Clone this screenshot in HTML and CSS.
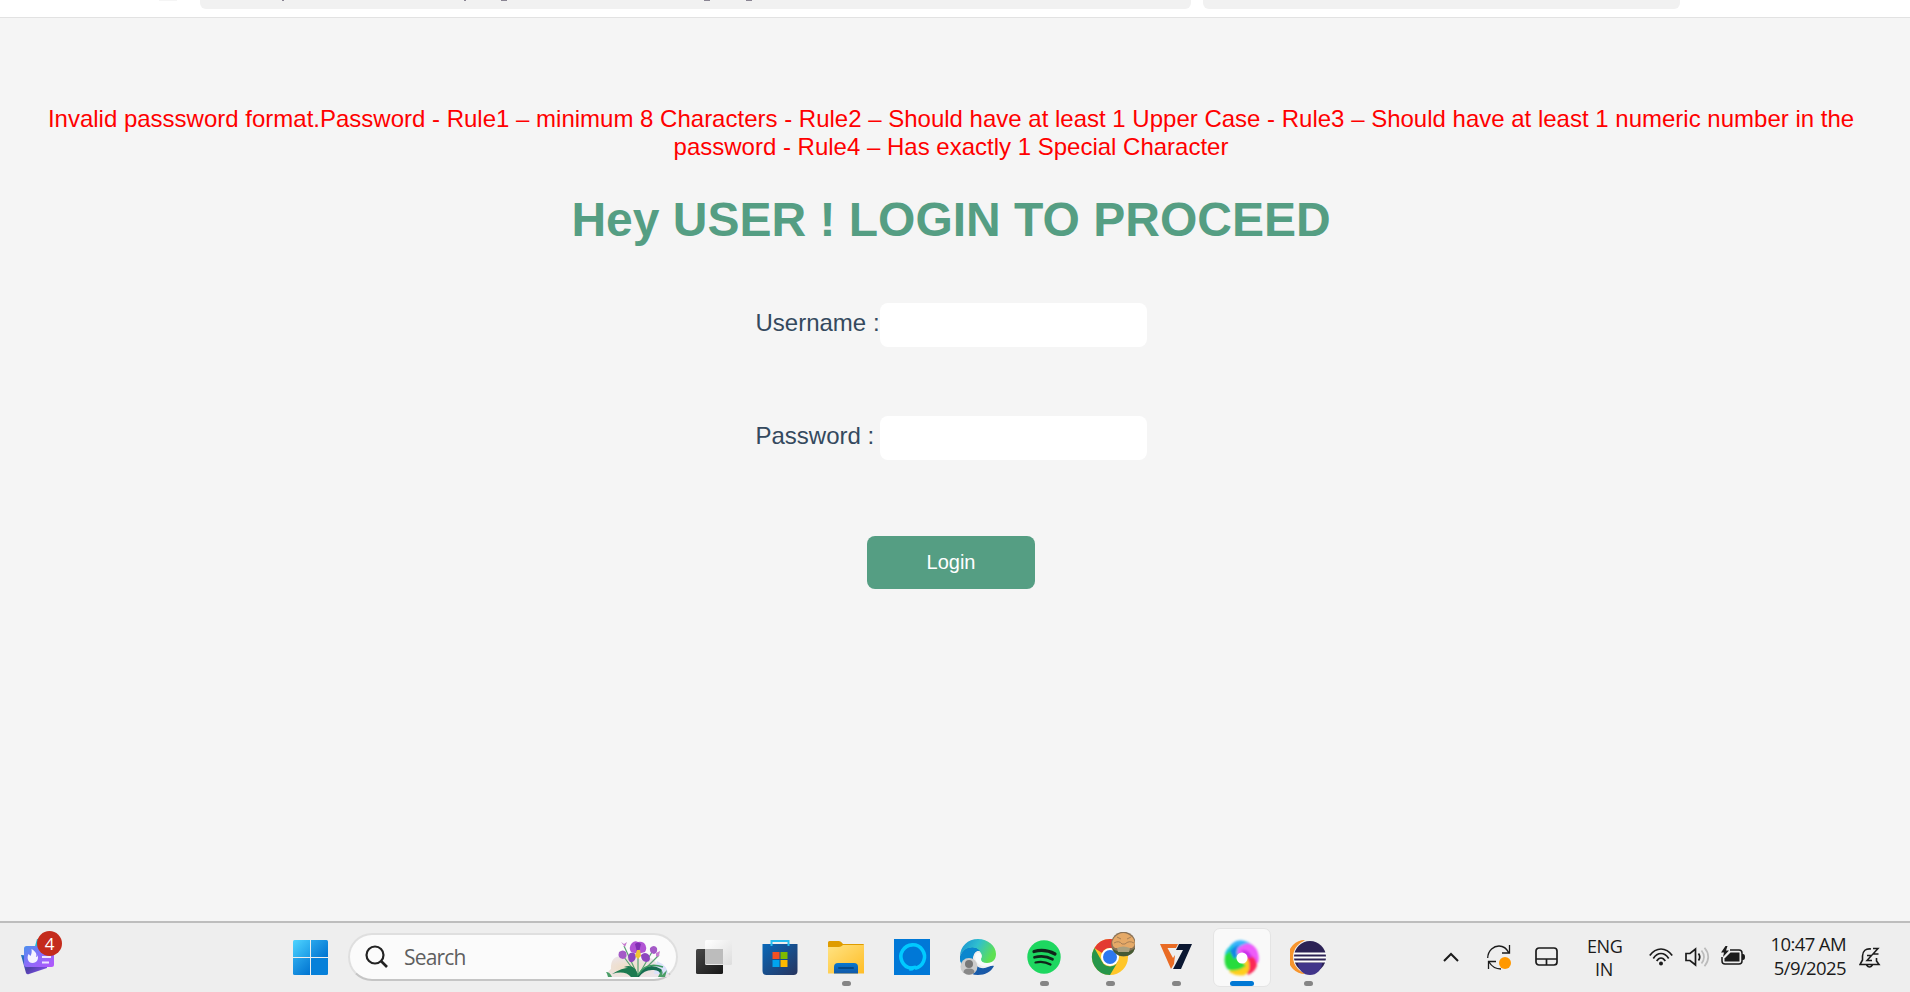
FILE: index.html
```html
<!DOCTYPE html>
<html lang="en">
<head>
<meta charset="utf-8">
<title>Login</title>
<link rel="stylesheet" href="styles.css">
</head>
<body>
<header class="toolbar">
  <div class="reload"></div>
  <div class="pill pill-url">
    <svg class="clipped-line" width="600" height="1" viewBox="0 0 600 1"><path d="M83 0h2v1h-2zM265 0h2v1h-2zM302 0h6v1h-6zM505 0h6v1h-6zM547 0h6v1h-6z" fill="#8a8593"/></svg>
  </div>
  <div class="pill pill-side"></div>
</header>
<main class="page">
  <p class="error">Invalid passsword format.Password - Rule1 – minimum 8 Characters - Rule2 – Should have at least 1 Upper Case - Rule3 – Should have at least 1 numeric number in the password - Rule4 – Has exactly 1 Special Character</p>
  <h1 class="title">Hey USER ! LOGIN TO PROCEED</h1>
  <form class="form">
    <div class="field"><label class="label" for="u">Username :</label><input class="input" id="u" type="text"></div>
    <div class="field"><label class="label" for="p">Password :</label><input class="input" id="p" type="password"></div>
    <button class="login" type="button">Login</button>
  </form>
</main>
<footer class="taskbar">
  <div class="widgets">
    <svg width="36" height="40" viewBox="0 0 36 40">
      <defs>
        <linearGradient id="wg" x1="0" y1="0" x2="1" y2="1"><stop offset="0" stop-color="#4b91ee"/><stop offset=".5" stop-color="#8b6cfa"/><stop offset="1" stop-color="#b455fb"/></linearGradient>
        <linearGradient id="wb" x1="0" y1="0" x2="1" y2="1"><stop offset="0" stop-color="#1e77c8"/><stop offset=".5" stop-color="#5041a8"/><stop offset="1" stop-color="#8d52fa"/></linearGradient>
      </defs>
      <path d="M14 9 16 2h12v10H14z" fill="#20bbd4"/>
      <path d="M0 18 5 36q1 2 3 1l18-6V20z" fill="url(#wb)"/>
      <rect x="3" y="9" width="30" height="21" rx="2.500" fill="url(#wg)"/>
      <path d="M10.500 12c5 3 5.500 5.500 4.500 8 1 0 1.500-1 1.500-2 1.500 4-.5 8-5 8s-6-5-4-9l2 2c1-2 1.500-4 1-7z" fill="#f5f3ff"/>
      <path d="M21 20h9M21 25.500h7" stroke="#eee5ff" stroke-width="2"/>
    </svg>
    <span class="badge">4</span>
  </div>
  <div class="apps">
    <svg class="start" width="35" height="35" viewBox="0 0 35 35">
      <defs><linearGradient id="win" x1="0" y1="0" x2="1" y2="1"><stop offset="0" stop-color="#4fd4ff"/><stop offset="1" stop-color="#1b9be6"/></linearGradient>
      <linearGradient id="win2" x1="0" y1="0" x2="1" y2="1"><stop offset="0" stop-color="#29a7ec"/><stop offset="1" stop-color="#0073d0"/></linearGradient></defs>
      <path d="M1.500 0H17v17H0V1.500Q0 0 1.500 0z" fill="url(#win)"/><path d="M18 0h15.500Q35 0 35 1.500V17H18z" fill="url(#win2)"/><path d="M0 18h17v17H1.500Q0 35 0 33.500z" fill="url(#win2)"/><path d="M18 18h17v15.500q0 1.500-1.500 1.500H18z" fill="#0680d9"/>
    </svg>
    <div class="search">
      <svg class="lens" width="24" height="24" viewBox="0 0 24 24" fill="none" stroke="#222" stroke-width="2.200"><circle cx="10" cy="10" r="8.500"/><path d="m16 16 6 6" stroke-width="2.600"/></svg>
      <span class="search-text">Search</span>
      <svg class="flower" width="64" height="37" viewBox="0 0 64 37">
        <defs><radialGradient id="fb" cx=".3" cy=".6"><stop offset="0" stop-color="#f0ddc4"/><stop offset="1" stop-color="#ebe4e8"/></radialGradient></defs>
        <path d="M3 36Q0 31 5 28 4 14 18 15q9-5 17 4 9-7 16 4 9 1 10 7l3 6z" fill="url(#fb)"/>
        <path d="M51 20q11 5 11 13H48z" fill="#dbe1fa"/>
        <g fill="none" stroke="#5aa274" stroke-width="1.200"><path d="M32 35 18 5M32 35V14M32 35 46 11M32 35 18 16M32 35 53 14"/></g>
        <path d="M32 36Q29 19 6 33q13-4 19 3zM32 36Q30 22 18 26q9 1 11 10z" fill="#1c7a50"/>
        <path d="M31 36Q40 19 55 28q3 4 0 7-1-7-9-6-8 0-13 7z" fill="#176d52"/>
        <path d="M32 34Q40 20 57 26" fill="none" stroke="#3b9b62" stroke-width="1.500"/>
        <path d="M2 36q-1-4-2-5 4 0 6 5M52 36l4-8v6l5-5-2 7z" fill="#4a9e68"/>
        <path d="M26 2q3-3 6-1 3-1 6 1 4 4 1 9l-7 2-7-2q-3-5 1-9z" fill="#b154d4"/>
        <path d="M29 3q3-3 6 0l-2 8h-2z" fill="#812fb3"/>
        <path d="M24 12q5-2 6 3-1 7-6 6-4-5 0-9zM35 14q4-4 8 0 3 7-3 7-5-1-5-7z" fill="#8d46be"/>
        <path d="M31 9h3l1 6-3 3-3-3z" fill="#efc635"/>
        <g fill="#a45ac7"><path d="M13 11q4-3 7 0 2 6-3 7-6-1-4-7zM44 7q4-4 7 0 1 5-3 6-5-1-4-6z"/></g>
        <g fill="#c77bd1"><path d="m15 1 3 2 3-2-2 5zM50 12l4-2-1 5-3 1z"/></g>
      </svg>
    </div>
    <div class="cell"><svg width="36" height="36" viewBox="0 0 36 36"><defs><linearGradient id="tv" x2="1" y2="1"><stop stop-color="#474747"/><stop offset="1" stop-color="#171717"/></linearGradient><linearGradient id="tg" x2="1" y2="1"><stop stop-color="#fff"/><stop offset="1" stop-color="#ddd"/></linearGradient></defs><rect x="0" y="10" width="27" height="25" rx="1.500" fill="url(#tv)"/><rect x="9" y="1" width="27" height="25" rx="1.500" fill="url(#tg)"/><path d="M9 10h18v15H10q-1 0-1-1z" fill="#bcbcbc"/></svg></div>
    <div class="cell store"><svg width="36" height="36" viewBox="0 0 36 36"><defs><linearGradient id="st" x2="1" y2="1"><stop stop-color="#0968b9"/><stop offset="1" stop-color="#27345e"/></linearGradient></defs><path d="M.5 5h35v27q0 4-4 4h-27q-4 0-4-4z" fill="url(#st)"/><path d="M9.500 7V2h17v5" fill="none" stroke="#27bdf0" stroke-width="2"/><path d="M10.500 13h7v7h-7z" fill="#f25022"/><path d="M18.500 13h7v7h-7z" fill="#7fba00"/><path d="M10.500 21h7v7h-7z" fill="#00a4ef"/><path d="M18.500 21h7v7h-7z" fill="#ffb900"/></svg></div>
    <div class="cell"><svg width="36" height="36" viewBox="0 0 36 36"><defs><linearGradient id="fo" x2="1" y2="1"><stop stop-color="#ffe383"/><stop offset="1" stop-color="#ffbd26"/></linearGradient><linearGradient id="fp" x2="0" y2="1"><stop stop-color="#0878d0"/><stop offset="1" stop-color="#1258a7"/></linearGradient></defs><path d="M0 3.500Q0 2 1.500 2H11q2 0 4 3h20q1 0 1 1v10H0z" fill="#df9c00"/><path d="M0 8h11q2 0 4-2h21v28.500H0z" fill="url(#fo)"/><path d="M6 34.500V28q0-4 4-4h16q4 0 4 4v6.500z" fill="url(#fp)"/><path d="M11 29h14" stroke="#064a88" stroke-width="2" stroke-linecap="round"/></svg><i class="dot"></i></div>
    <div class="cell"><svg width="36" height="36" viewBox="0 0 36 36"><path fill="#0078d7" d="M0 0h36v36H0z"/><path d="M17 31.500v-2.200A11.800 11.800 0 1 1 21 29.200" fill="none" stroke="#00caff" stroke-width="3.600"/><path d="M15.500 31.500q5-.5 8-3l-2-2-6 1z" fill="#00caff"/></svg></div>
    <div class="cell"><svg width="36" height="36" viewBox="0 0 36 36"><defs><linearGradient id="eg" x2="1" y2=".4"><stop stop-color="#168cd2"/><stop offset=".5" stop-color="#30bfcf"/><stop offset="1" stop-color="#5ee052"/></linearGradient><linearGradient id="eb" x2="1" y2="1"><stop stop-color="#0a69b7"/><stop offset="1" stop-color="#1d55a4"/></linearGradient></defs><path d="M0 18C0 7 8 0 18 0s18 7 18 15c0 6-4 9-9 9-6 0-8-2-6-5 2-4-1-8-6-9C8 8 1 13 0 18z" fill="url(#eg)"/><path d="M0 18C3 8 15 6 20 12c-4-1-7 3-7 7 0 7 6 11 12 10 4-1 6-3 9-2-3 6-9 9-16 9C8 36 0 28 0 18z" fill="url(#eb)"/><path d="M0 18C3 8 15 6 20 12c-4-1-7 3-7 7l-8 8q-5-1-5-9z" fill="#0b87ce"/><path d="M15 17q1-4 5-3 3 2 1 6 0 4 6 4 5 0 7-2l-1 4q-8 3-13 0-5-3-5-9z" fill="#f7fafb"/><circle cx="9" cy="27.500" r="8.500" fill="#ccc"/><circle cx="9" cy="25" r="4" fill="#777"/><path d="M3.500 33.500q0-4 5.500-4t5.500 4Q9 38 3.500 33.500z" fill="#888"/></svg></div>
    <div class="cell"><svg width="36" height="36" viewBox="0 0 36 36"><circle cx="18" cy="18" r="16.700" fill="#1ed760"/><g fill="none" stroke="#10251a" stroke-linecap="round"><path d="M8 12.500q11-3 21 2.500" stroke-width="3.200"/><path d="M8.500 18.300q10-2.500 18 2" stroke-width="2.700"/><path d="M9.500 23.500q8-2 15 2" stroke-width="2.200"/></g></svg><i class="dot"></i></div>
    <div class="cell"><svg width="50" height="50" viewBox="-7 -7 50 50"><circle cx="18" cy="18" r="18" fill="#ffc629"/><path d="M2.400 9A18 18 0 0 1 33.600 9H18a9 9 0 0 0-8 5z" fill="#e33b32"/><path d="M2.400 9A18 18 0 0 0 18 36l8-13.500a9 9 0 0 1-16 0z" fill="#26964a"/><circle cx="18" cy="18" r="9" fill="#fff"/><circle cx="18" cy="18" r="7" fill="#2e78ef"/><circle cx="31.500" cy="5" r="12.300" fill="#8a7358"/><path d="M22-1q9-10 19 0 4 7-1 10H23q-5-4-1-10z" fill="#e5a967"/><path d="M20 9q4 4 11 3 7 1 12-3-2 8-11.500 8.300Q23 17 20 9z" fill="#465a34"/><path d="M25 9q6-3 13 0l-1 4H26z" fill="#aaa07e"/><path d="M22 4q5-3 8 1h3q4-4 9-1M25-2l4 2M35 0l4-2" fill="none" stroke="#a87f54" stroke-width="1"/></svg><i class="dot"></i></div>
    <div class="cell"><svg width="36" height="36" viewBox="0 0 36 36"><path d="M2 5h18l-2 4H9.500l5.500 10 2-3-1 9-3 5z" fill="#e96b24"/><path d="M21 5h13L23 30h-8l10-19h-7z" fill="#0b1731"/></svg><i class="dot"></i></div>
    <div class="cell active"><svg width="40" height="40" viewBox="-20 -20 40 40"><defs><filter id="soft" x="-20%" y="-20%" width="140%" height="140%"><feGaussianBlur stdDeviation=".8"/></filter></defs><g filter="url(#soft)"><path d="M-14-9Q-8-20 3-17 11-14 12-10L2-5-9 1z" fill="#38b4fa"/><path d="M-8 0Q-18 0-17-4-16-10-9-13L-3-4z" fill="#1cc5dc"/><path d="M-4-10Q8-20 15-8 18 0 16 5L8 4 4-3-5-4z" fill="#ed5cfa"/><path d="M4-5Q15-1 15 7 14 13 6 17L1 9 5 2z" fill="#fb2755"/><path d="M6 1Q10 12 3 17-5 19-13 14L-6 5 2 5z" fill="#ffce1f"/><path d="M-17-3Q-19 8-13 12-5 14 4 8L0 4-5 0-7-6-11-8z" fill="#26dc3c"/><path d="M-12-7Q-7-13-2-13-8-8-5-2L-8 1z" fill="#1583e8"/><path d="M-1-8Q8-9 10 0L4-1z" fill="#c92ee9"/></g><circle r="5.500" fill="#fff"/></svg><i class="dot current"></i></div>
    <div class="cell"><svg width="36" height="36" viewBox="0 0 36 36"><path d="M15 1A17 17 0 0 0 15 35Q5 28 5 18T15 1z" fill="#f7952d"/><circle cx="20" cy="18" r="17" fill="#eee"/><circle cx="20" cy="18" r="16" fill="#2c2255"/><path d="M8 24a12 12 0 0 0 24 0z" fill="#41358a"/><path d="M4 14.500h32M4 18.500h32M4 22.500h32" stroke="#fff" stroke-width="2"/></svg><i class="dot"></i></div>
  </div>
  <div class="tray">
    <svg class="chevron" width="16" height="10" viewBox="0 0 16 10" fill="none" stroke="#1b1b1b" stroke-width="2"><path d="m1 9 7-7 7 7"/></svg>
    <svg class="sync" width="25" height="25" viewBox="0 0 25 25" fill="none" stroke="#1b1b1b" stroke-width="1.300"><path d="M.7 13C1 5 7 1 12 1c5 0 8 3 10 7M22.500 0v8H15M1.500 24v-7.500H9M2 17c3 5 7 7 12 7"/><circle cx="18" cy="18" r="6" fill="#ff9800" stroke="none"/></svg>
    <svg class="pad" width="23" height="19" viewBox="0 0 23 19" fill="none" stroke="#1b1b1b" stroke-width="1.700"><rect x="1" y="1" width="21" height="17" rx="3"/><path d="M1 12h21M11.500 12v6"/></svg>
    <div class="lang"><span>ENG</span><span>IN</span></div>
    <svg class="wifi" width="24" height="18" viewBox="0 0 24 18" fill="none" stroke="#1b1b1b" stroke-width="1.700"><path d="M.8 7.500Q5.500 1 12 1t11.200 6.500M4.300 10.500Q7.500 5.500 12 5.500t7.700 5M7.700 13Q9.500 10 12 10t4.300 3"/><circle cx="12" cy="15.500" r="2" fill="#1b1b1b" stroke="none"/></svg>
    <svg class="sound" width="25" height="20" viewBox="0 0 25 20" fill="none" stroke="#1b1b1b" stroke-width="1.700"><path d="M1 6.500h4L10.500 2v16L5 13.500H1z"/><path d="M13.500 6.500q2.500 3.500 0 7"/><path d="M16.500 3.500q5 6.500 0 13M19.500.8q7.500 9 0 18.400" stroke="#bbb"/></svg>
    <svg class="battery" width="25" height="20" viewBox="0 0 25 20"><path d="M9 4h9q3 0 3 3v8q0 3-3 3H4q-3 0-3-3v-4" fill="none" stroke="#1b1b1b" stroke-width="1.500"/><path d="M9.500 6.500h9v9h-15v-3z" fill="#1b1b1b"/><path d="M21 8h1q2 0 2 3t-2 3h-1z" fill="#1b1b1b"/><path d="M4.500 0 0 6.500h3L2 11l6-6.500H5L6.500 0z" fill="#1b1b1b"/></svg>
    <div class="clock"><span class="time">10:47 AM</span><span class="date">5/9/2025</span></div>
    <svg class="bell" width="22" height="22" viewBox="0 0 22 22" fill="none" stroke="#1b1b1b" stroke-width="1.600"><path d="M12 2Q4 1 3.500 9v4L1 17.500h19L17.500 14v-3M7.500 18q3 4 6 0"/><path d="M14 1.500h5L14 7h5.500M8 8.500h4.500L8 13.500h5" stroke-width="1.500"/></svg>
  </div>
</footer>
</body>
</html>
```
FILE: styles.css
```css
* { box-sizing: border-box; }
body { margin: 0; height: 992px; display: flex; flex-direction: column; overflow: hidden; background: #f5f5f5; font-family: "Liberation Sans", Arial, sans-serif; }
.toolbar { height: 18px; flex: none; display: flex; gap: 12px; padding-left: 159px; background: #fff; border-bottom: 1px solid #e2e2e2; }
.reload { width: 18px; height: 1px; margin-right: 11px; background: #f5f5f5; }
.pill { height: 9px; background: #f1f1f1; border-radius: 0 0 6px 6px; }
.pill-url { width: 991px; }
.pill-side { width: 477px; }
.clipped-line { display: block; margin-left: -1px; }
.page { flex: 1; padding: 87px 30px 0 22px; text-align: center; }
.error { margin: 0; color: #f00; font-size: 24px; line-height: 28px; }
.title { margin: 30px 0 0; color: #559e83; font-size: 48px; line-height: 58px; font-weight: 700; }
.form { display: flex; flex-direction: column; align-items: center; margin-top: 54px; }
.field { display: flex; width: 391px; height: 44px; margin-bottom: 69px; text-align: left; }
.label { width: 124px; font-size: 24px; line-height: 40px; color: #34495e; white-space: nowrap; }
.input { width: 267px; height: 44px; border: 0; border-radius: 8px; background: #fff; padding: 8px; }
.login { width: 168px; height: 53px; margin-top: 7px; border: 0; border-radius: 8px; background: #559e83; color: #fff; font: 20px "Liberation Sans", Arial, sans-serif; }
.taskbar { flex: none; height: 71px; display: flex; border-top: 2px solid #bdbdbd; background: #eee; font-family: "Open Sans", "Noto Sans", sans-serif; }
.widgets { position: relative; width: 293px; padding: 14px 0 0 21px; }
.badge { position: absolute; left: 37px; top: 8px; width: 25px; height: 25px; border-radius: 50%; background: #c42b1c; color: #fff; font-size: 17px; line-height: 25px; text-align: center; }
.apps { display: flex; width: 1048px; }
.start { margin: 17px 20px 0 0; flex: none; }
.search { display: flex; flex: none; width: 330px; height: 48px; margin: 10px 3px 0 0; padding-left: 15px; border: 2px solid #dfdfdf; border-bottom-color: #c5c5c5; border-radius: 24px; background: #fbfbfb; }
.search svg { flex: none; }
.lens { margin-top: 10px; }
.search-text { flex: none; width: 217px; padding-left: 15px; font-size: 21px; line-height: 45px; color: #5f5f5f; letter-spacing: -.8px; }
.flower { margin-top: 6px; }
.cell { display: flex; justify-content: center; align-items: center; position: relative; flex: none; width: 58px; height: 60px; margin: 4px 4px 0; border-radius: 7px; }
.active { height: 59px; margin-top: 5px; background: #f9f9f9; border: 1px solid #e4e4e4; }
.dot { position: absolute; bottom: 1px; width: 9px; height: 5px; border-radius: 3px; background: #858585; }
.current { width: 24px; background: #0078d4; bottom: 0; }
.tray { display: flex; padding-left: 102px; color: #1b1b1b; font-size: 18px; }
.tray svg { flex: none; }
.chevron { margin: 29px 28px 0 0; }
.sync { margin: 22px 23px 0 0; }
.pad { margin: 24px 29px 0 0; }
.lang { display: flex; flex-direction: column; width: 34px; margin-right: 28px; padding-top: 12px; text-align: center; line-height: 23px; letter-spacing: -.4px; white-space: nowrap; }
.wifi { margin: 25px 12px 0 0; }
.sound { margin: 24px 11px 0 0; }
.battery { margin: 23px 20px 0 0; }
.clock { display: flex; flex-direction: column; width: 80px; margin-right: 13px; padding-top: 9px; text-align: right; line-height: 24px; white-space: nowrap; font-size: 18.500px; letter-spacing: -.6px; }
.bell { margin-top: 24px; }
```
